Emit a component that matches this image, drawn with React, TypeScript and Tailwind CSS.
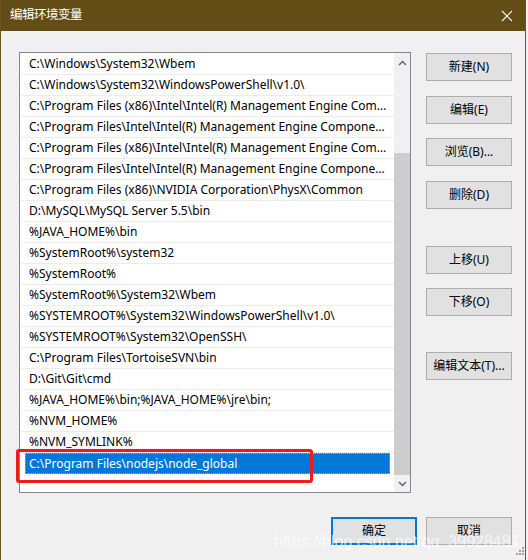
import React from 'react'

const paths = [
    'C:\\Windows\\System32\\Wbem',
    'C:\\Windows\\System32\\WindowsPowerShell\\v1.0\\',
    'C:\\Program Files (x86)\\Intel\\Intel(R) Management Engine Components\\DAL',
    'C:\\Program Files\\Intel\\Intel(R) Management Engine Components\\DAL',
    'C:\\Program Files (x86)\\Intel\\Intel(R) Management Engine Components\\IPT',
    'C:\\Program Files\\Intel\\Intel(R) Management Engine Components\\IPT',
    'C:\\Program Files (x86)\\NVIDIA Corporation\\PhysX\\Common',
    'D:\\MySQL\\MySQL Server 5.5\\bin',
    '%JAVA_HOME%\\bin',
    '%SystemRoot%\\system32',
    '%SystemRoot%',
    '%SystemRoot%\\System32\\Wbem',
    '%SYSTEMROOT%\\System32\\WindowsPowerShell\\v1.0\\',
    '%SYSTEMROOT%\\System32\\OpenSSH\\',
    'C:\\Program Files\\TortoiseSVN\\bin',
    'D:\\Git\\Git\\cmd',
    '%JAVA_HOME%\\bin;%JAVA_HOME%\\jre\\bin;',
    '%NVM_HOME%',
    '%NVM_SYMLINK%',
]

const font = { fontFamily: '"Noto Sans", "Noto Sans CJK SC", sans-serif' }

const Btn = ({ label, className = '' }: { label: string; className?: string }) => (
    <button className={`w-[86px] h-[28px] bg-[#e1e1e1] border border-[#adadad] text-[12px] text-black ${className}`}>
        {label}
    </button>
)

export default function App() {
    return (
        <div className="w-[528px] h-[560px] bg-[#f0f0f0] overflow-hidden relative" style={font}>
            <div className="w-[526px] h-[560px] border-x border-[#6b5420] flex flex-col">
                {/* title bar */}
                <div className="h-[31px] bg-[#634c15] flex items-center justify-between pl-[9px] pr-[12px] text-white">
                    <span className="text-[12.5px] tracking-[-0.5px]">编辑环境变量</span>
                    <svg width="12" height="12" viewBox="0 0 12 12">
                        <path d="M1 1L11 11M11 1L1 11" stroke="#fff" strokeWidth="1.1" />
                    </svg>
                </div>

                <div className="flex mt-[21px] ml-[18px]">
                    {/* list */}
                    <div className="w-[392px] h-[441px] border border-[#828790] bg-white flex shrink-0">
                        <div className="flex-1 min-w-0 flex flex-col pl-[1px] pt-[1px]">
                            {paths.map((p) => (
                                <div key={p} className="h-[21px] min-w-0 border-b border-[#ececec] flex items-center pl-[8px] pr-[4px] text-[12px] text-black">
                                    <span className="truncate min-w-0">{p}</span>
                                </div>
                            ))}
                            <div className="h-[21px] mx-[4px] bg-[#0078d7] outline-1 outline-dotted outline-[#f5a623] -outline-offset-1 flex items-center pl-[4px] text-[12px] text-white">
                                C:\Program Files\nodejs\node_global
                            </div>
                        </div>
                        <div className="w-[16px] shrink-0 bg-[#f0f0f0] flex flex-col items-center">
                            <div className="h-[20px] flex items-center justify-center">
                                <svg width="9" height="6" viewBox="0 0 9 6">
                                    <path d="M1 5L4.5 1.5L8 5" stroke="#606060" strokeWidth="1.4" fill="none" />
                                </svg>
                            </div>
                            <div className="h-[80px]" />
                            <div className="w-full h-[322px] bg-[#cdcdcd]" />
                            <div className="flex-1 flex items-center justify-center">
                                <svg width="9" height="6" viewBox="0 0 9 6">
                                    <path d="M1 1L4.5 4.5L8 1" stroke="#606060" strokeWidth="1.4" fill="none" />
                                </svg>
                            </div>
                        </div>
                    </div>

                    {/* side buttons */}
                    <div className="flex flex-col ml-[15px] mt-[1px]">
                        <Btn label="新建(N)" />
                        <Btn label="编辑(E)" className="mt-[15px]" />
                        <Btn label="浏览(B)..." className="mt-[14px]" />
                        <Btn label="删除(D)" className="mt-[15px]" />
                        <Btn label="上移(U)" className="mt-[37px]" />
                        <Btn label="下移(O)" className="mt-[14px]" />
                        <Btn label="编辑文本(T)..." className="mt-[36px]" />
                    </div>
                </div>

                {/* bottom buttons */}
                <div className="flex justify-end gap-[9px] mt-[24px] pr-[13px]">
                    <button className="w-[86px] h-[28px] bg-[#e1e1e1] border-2 border-[#0078d7] text-[12px] text-black">确定</button>
                    <Btn label="取消" />
                </div>
            </div>

            {/* red highlight */}
            <div className="absolute left-[16px] top-[449px] w-[297px] h-[34px] border-[3px] border-[#f01c1c] rounded-[3px]" />

            {/* watermark */}
            <div className="absolute left-[274px] top-[530px] text-[16px] text-white/70 pointer-events-none" style={{ fontFamily: '"Liberation Sans", sans-serif' }}>
                https://blog.csdn.net/qq_39928481
            </div>

            {/* resize grip */}
            <svg className="absolute left-[515px] top-[546px]" width="10" height="10" viewBox="0 0 10 10">
                <g fill="#a0a0a0">
                    <rect x="7" y="1" width="2" height="2" />
                    <rect x="4" y="4" width="2" height="2" />
                    <rect x="7" y="4" width="2" height="2" />
                    <rect x="1" y="7" width="2" height="2" />
                    <rect x="4" y="7" width="2" height="2" />
                    <rect x="7" y="7" width="2" height="2" />
                </g>
            </svg>
        </div>
    )
}
